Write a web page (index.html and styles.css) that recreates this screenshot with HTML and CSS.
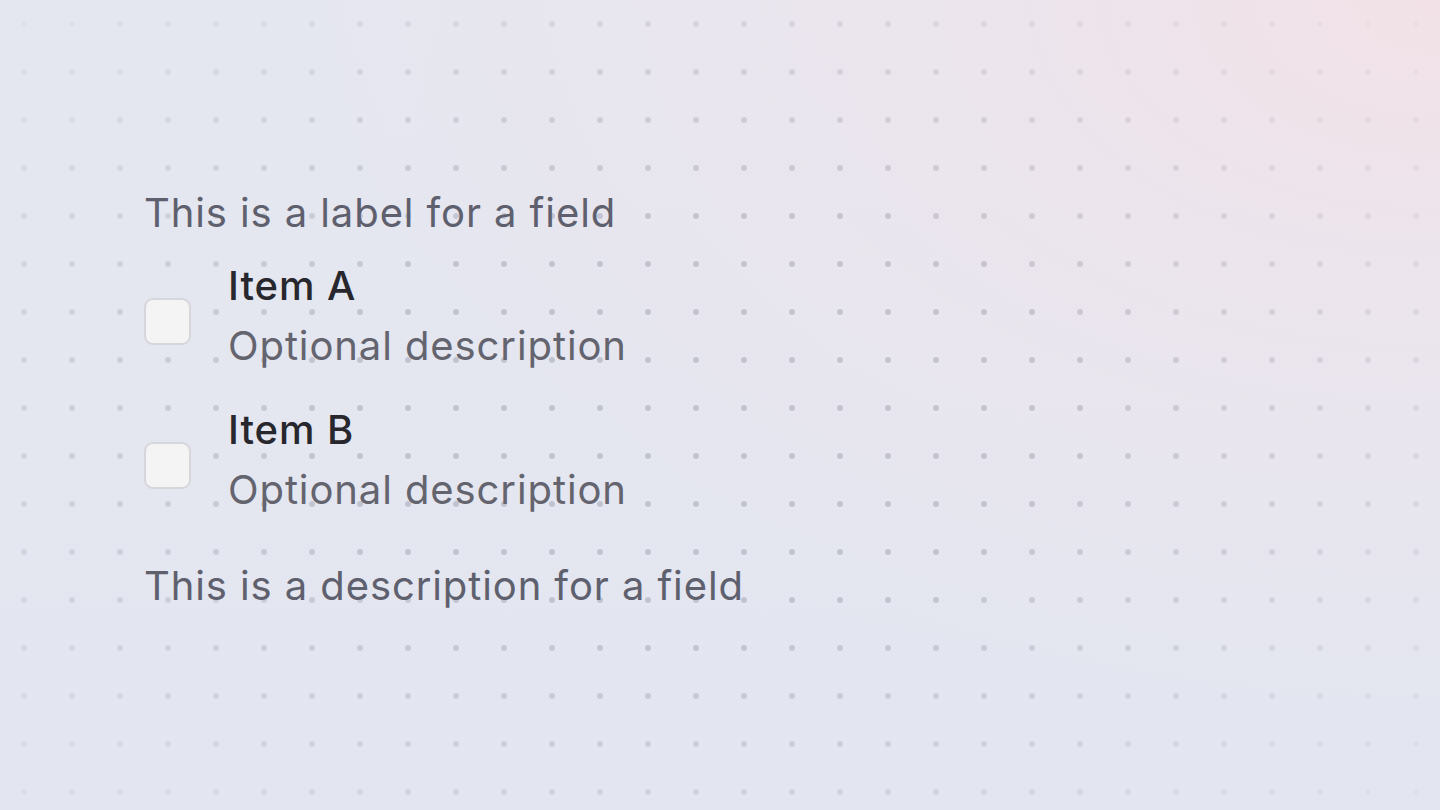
FILE: index.html
```html
<!DOCTYPE html>
<html lang="en">
<head>
<meta charset="utf-8">
<title>Checkbox group</title>
<link rel="stylesheet" href="styles.css">
</head>
<body>
<div class="bg"></div>
<div class="dots"></div>
<main class="page">
  <fieldset class="field">
    <div class="field-label">This is a label for a field</div>
    <div class="options">
      <label class="option">
        <span class="box"></span>
        <span class="text">
          <span class="title">Item A</span>
          <span class="desc">Optional description</span>
        </span>
      </label>
      <label class="option">
        <span class="box"></span>
        <span class="text">
          <span class="title">Item B</span>
          <span class="desc">Optional description</span>
        </span>
      </label>
    </div>
    <div class="field-desc">This is a description for a field</div>
  </fieldset>
</main>
</body>
</html>
```

FILE: styles.css
```css
html, body {
  margin: 0;
  padding: 0;
  width: 1440px;
  height: 810px;
  overflow: hidden;
}
body {
  font-family: Inter, "Noto Sans", sans-serif;
  background: #e4e6f0;
  position: relative;
}
.bg {
  position: absolute;
  inset: 0;
  background:
    radial-gradient(ellipse 1150px 720px at 1440px 0px, rgba(242, 226, 231, 1) 0%, rgba(238, 228, 236, 0.75) 40%, rgba(228, 230, 240, 0) 100%),
    linear-gradient(180deg, #e5e7f0 0%, #e3e6f0 100%);
}
.dots {
  position: absolute;
  inset: 0;
  background-image: radial-gradient(circle at 24px 24px, rgba(150, 152, 172, 0.45) 2.6px, rgba(150, 152, 172, 0) 3.3px);
  background-size: 48px 48px;
  -webkit-mask-image: radial-gradient(ellipse 980px 560px at 680px 420px, rgba(0,0,0,1) 35%, rgba(0,0,0,0.45) 75%, rgba(0,0,0,0.12) 100%);
  mask-image: radial-gradient(ellipse 980px 560px at 680px 420px, rgba(0,0,0,1) 35%, rgba(0,0,0,0.45) 75%, rgba(0,0,0,0.12) 100%);
}
.page {
  position: relative;
  padding: 183px 0 0 144px;
}
.field {
  margin: 0;
  padding: 0;
  border: 0;
  display: flex;
  flex-direction: column;
}
.field-label,
.title,
.desc,
.field-desc {
  font-size: 40px;
  line-height: 60px;
  letter-spacing: 0.9px;
}
.field-label {
  color: #5f606e;
  margin-bottom: 13px;
}
.options {
  display: flex;
  flex-direction: column;
  gap: 24px;
}
.option {
  display: flex;
  align-items: flex-start;
  gap: 37px;
}
.box {
  flex: none;
  width: 43px;
  height: 43px;
  margin-top: 42px;
  border: 2px solid #d6d6db;
  border-radius: 9px;
  background: #f4f4f5;
}
.text {
  display: flex;
  flex-direction: column;
}
.title {
  font-weight: 500;
  color: #27272d;
}
.desc {
  color: #64646f;
}
.field-desc {
  margin-top: 36px;
  color: #5f606e;
}
```
